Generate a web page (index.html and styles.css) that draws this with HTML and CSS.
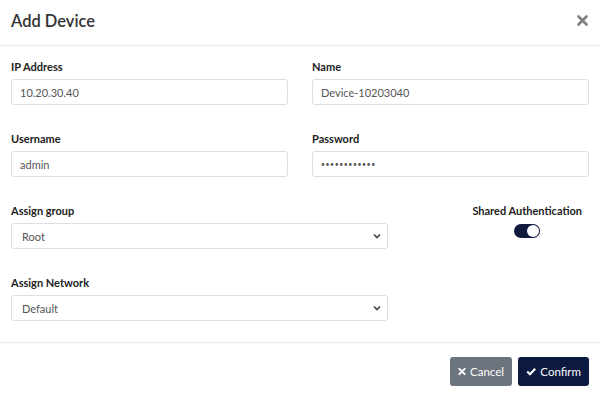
FILE: index.html
```html
<!DOCTYPE html>
<html lang="en">
<head>
    <meta charset="UTF-8">
    <meta name="viewport" content="width=device-width, initial-scale=1.0">
    <title>Add Device</title>
    <link rel="stylesheet" href="styles.css">
</head>
<body>
    <div class="modal">
        <div class="modal-header">
            <h2>Add Device</h2>
            <button class="close" aria-label="Close">
                <svg width="11" height="11" viewBox="0 0 11 11">
                    <path d="M1.5 1.5 L9.5 9.5 M9.5 1.5 L1.5 9.5" stroke="#808080" stroke-width="2.6" stroke-linecap="round"/>
                </svg>
            </button>
        </div>

        <div class="modal-body">
            <div class="row">
                <div class="field">
                    <label>IP Address</label>
                    <input class="control" type="text" value="10.20.30.40">
                </div>
                <div class="field">
                    <label>Name</label>
                    <input class="control" type="text" value="Device-10203040">
                </div>
            </div>

            <div class="row">
                <div class="field">
                    <label>Username</label>
                    <input class="control" type="text" value="admin">
                </div>
                <div class="field">
                    <label>Password</label>
                    <input class="control password" type="password" value="secretpasswd">
                </div>
            </div>

            <div class="row row-wide">
                <div class="field">
                    <label>Assign group</label>
                    <div class="select-wrap">
                        <select class="control">
                            <option>Root</option>
                        </select>
                        <svg class="chevron" width="8" height="6" viewBox="0 0 8 6">
                            <path d="M1 1.5 L4 4.5 L7 1.5" fill="none" stroke="#444" stroke-width="1.6"/>
                        </svg>
                    </div>
                </div>
                <div class="field shared">
                    <div class="shared-inner">
                        <label>Shared Authentication</label>
                        <span class="switch"><span class="knob"></span></span>
                    </div>
                </div>
            </div>

            <div class="row row-wide">
                <div class="field">
                    <label>Assign Network</label>
                    <div class="select-wrap">
                        <select class="control">
                            <option>Default</option>
                        </select>
                        <svg class="chevron" width="8" height="6" viewBox="0 0 8 6">
                            <path d="M1 1.5 L4 4.5 L7 1.5" fill="none" stroke="#444" stroke-width="1.6"/>
                        </svg>
                    </div>
                </div>
                <div></div>
            </div>
        </div>

        <div class="modal-footer">
            <button class="btn btn-cancel">
                <svg width="9" height="9" viewBox="0 0 9 9">
                    <path d="M1.5 1.5 L7.5 7.5 M7.5 1.5 L1.5 7.5" stroke="#fff" stroke-width="2.2" stroke-linecap="round"/>
                </svg>
                Cancel
            </button>
            <button class="btn btn-confirm">
                <svg width="11" height="9" viewBox="0 0 11 9">
                    <path d="M1.3 4.6 L4.2 7.4 L9.8 1.6" fill="none" stroke="#fff" stroke-width="2.3"/>
                </svg>
                Confirm
            </button>
        </div>
    </div>
</body>
</html>
```

FILE: styles.css
```css
* {
    margin: 0;
    padding: 0;
    box-sizing: border-box;
}

body {
    font-family: 'Lato', 'Open Sans', sans-serif;
    background: #fff;
    color: #212529;
}

.modal {
    width: 600px;
    height: 399px;
    display: flex;
    flex-direction: column;
}

.modal-header {
    height: 46px;
    display: flex;
    align-items: center;
    justify-content: space-between;
    padding: 0 11px 4px 11px;
    border-bottom: 1px solid #e9ecef;
}

.modal-header h2 {
    font-size: 16.5px;
    font-weight: 600;
    color: #333;
}

.close {
    background: none;
    border: none;
    display: flex;
    margin-right: 1px;
}

.modal-body {
    padding: 13px 11px 20px;
    flex: 1;
}

.row {
    display: grid;
    grid-template-columns: 1fr 1fr;
    column-gap: 24px;
    margin-bottom: 26px;
}

.row-wide {
    grid-template-columns: 377px 1fr;
}

.row:last-child {
    margin-bottom: 0;
}

.field label {
    display: block;
    font-size: 11px;
    font-weight: 700;
    line-height: 15px;
    margin-bottom: 5px;
    color: #222;
}

.control {
    width: 100%;
    height: 26px;
    border: 1px solid #dcdfe3;
    border-radius: 3px;
    padding: 0 8px;
    font-family: inherit;
    font-size: 11px;
    color: #555;
    background: #fff;
    outline: none;
}

.password {
    font-size: 7px;
    letter-spacing: 0.5px;
}

.select-wrap {
    position: relative;
}

select.control {
    appearance: none;
    -webkit-appearance: none;
    padding-left: 10px;
}

.chevron {
    position: absolute;
    right: 7px;
    top: 10px;
}

.shared {
    display: flex;
    justify-content: flex-end;
    padding-right: 7px;
}

.shared-inner {
    display: flex;
    flex-direction: column;
    align-items: center;
}

.shared-inner label {
    margin-bottom: 6px;
}

.switch {
    width: 26px;
    height: 14px;
    border-radius: 7px;
    background: #0f1a3d;
    position: relative;
    display: block;
}

.knob {
    position: absolute;
    right: 1px;
    top: 1px;
    width: 12px;
    height: 12px;
    border-radius: 50%;
    background: #fff;
}

.modal-footer {
    border-top: 1px solid #e9ecef;
    padding: 14px 11px 13px;
    display: flex;
    justify-content: flex-end;
    gap: 6px;
}

.btn {
    height: 29px;
    border: none;
    border-radius: 3px;
    color: #fff;
    font-family: inherit;
    font-size: 11.5px;
    display: flex;
    align-items: center;
    gap: 4px;
    padding: 0 8px;
}

.btn-cancel {
    background: #6c757d;
    width: 62px;
}

.btn-confirm {
    background: #0d1a3f;
    width: 71px;
}
```
